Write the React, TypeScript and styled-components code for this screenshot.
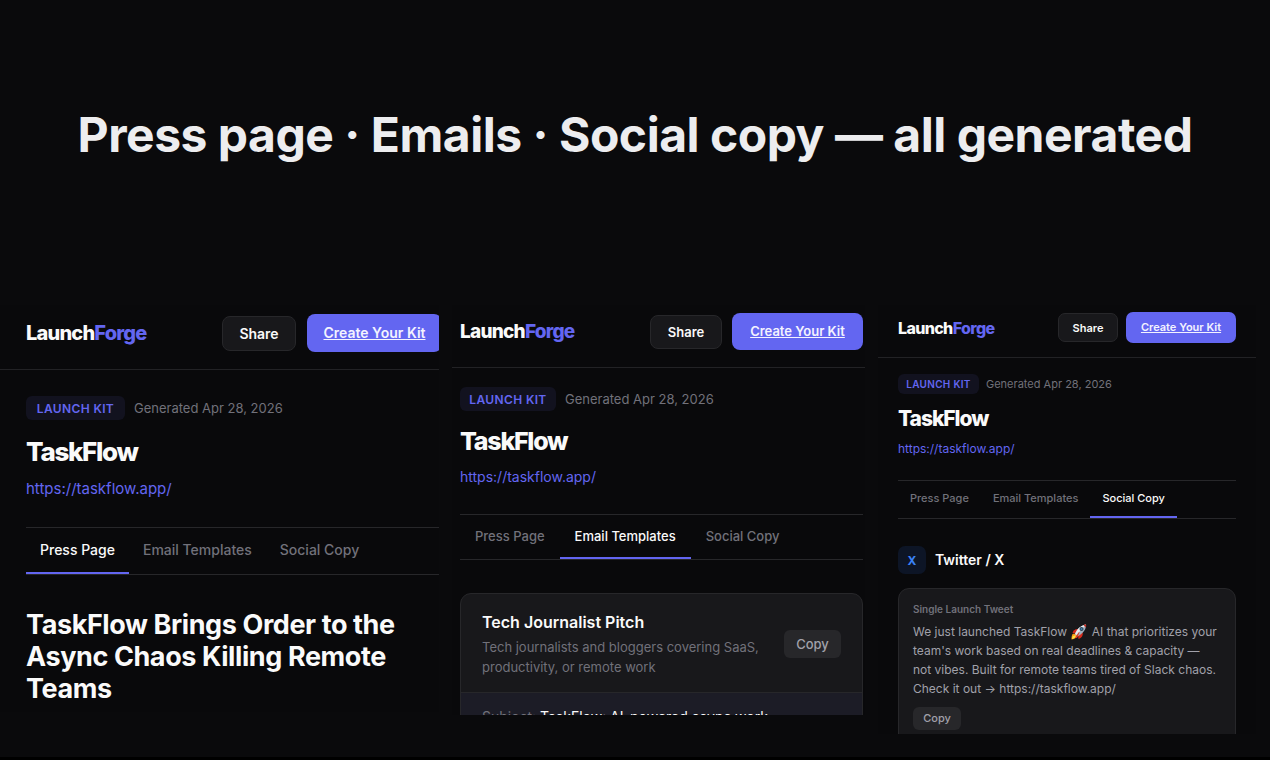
import React from "react";
import styled, { createGlobalStyle, ThemeProvider, css } from "styled-components";

const GlobalStyle = createGlobalStyle`
  *, *::before, *::after { box-sizing: border-box; }
  body {
    margin: 0;
    background: #0a0a0c;
    color: #fafafa;
    font-family: Inter, "Liberation Sans", sans-serif;
    -webkit-font-smoothing: antialiased;
    overflow: hidden;
  }
  h1, h2, h3, p { margin: 0; }
  button { font-family: inherit; cursor: pointer; }
`;

const large = {
  gutter: 26, cropHeight: 407, bleed: 29,
  headTop: 9, headBottom: 17, actionGap: 11,
  logo: 20, button: 14, share: [74, 35], create: [135, 38], radius: 8,
  bodyTop: 26, badge: [99, 24], badgeText: 12, meta: 13, metaGap: 9,
  title: 26, titleLine: 32, titleTop: 16,
  url: 15, urlLine: 22, urlTop: 10,
  navTop: 27, tab: 14, tabPad: 14, tabHeight: 46,
};

const medium: typeof large = {
  gutter: 8, cropHeight: 410, bleed: -7,
  headTop: 8, headBottom: 17, actionGap: 10,
  logo: 19, button: 13, share: [72, 34], create: [131, 37], radius: 8,
  bodyTop: 19, badge: [96, 24], badgeText: 12, meta: 13, metaGap: 9,
  title: 25, titleLine: 30, titleTop: 15,
  url: 14, urlLine: 22, urlTop: 10,
  navTop: 26, tab: 13, tabPad: 15, tabHeight: 44,
};

const small: typeof large = {
  gutter: 20, cropHeight: 429, bleed: 0,
  headTop: 7, headBottom: 14, actionGap: 8,
  logo: 16, button: 11, share: [60, 29], create: [110, 31], radius: 7,
  bodyTop: 16, badge: [81, 20], badgeText: 10, meta: 11, metaGap: 7,
  title: 21, titleLine: 26, titleTop: 12,
  url: 12, urlLine: 18, urlTop: 8,
  navTop: 22, tab: 11, tabPad: 12, tabHeight: 37,
};

type Size = typeof large;
declare module "styled-components" {
  export interface DefaultTheme extends Size {}
}

const Slide = styled.main`
  min-height: 100vh;
  display: flex;
  flex-direction: column;
  border-bottom: 3px solid #000;
`;

const Banner = styled.header`
  height: 305px;
  padding-top: 105px;
  text-align: center;
`;

const BannerTitle = styled.h1`
  font-size: 48px;
  line-height: 60px;
  font-weight: 700;
  letter-spacing: -0.01em;
  color: #ededef;
  white-space: nowrap;
`;

const Gallery = styled.section`
  display: grid;
  grid-template-columns: 439fr 413fr 378fr;
  column-gap: 13px;
  padding-right: 14px;
  align-items: start;
`;

const Panel = styled.article`
  min-width: 0;
  height: ${(p) => p.theme.cropHeight}px;
  overflow: hidden;
  background: #09090b;
`;

const PanelHead = styled.header`
  display: flex;
  align-items: center;
  justify-content: space-between;
  padding: ${(p) => p.theme.headTop}px ${(p) => p.theme.gutter}px ${(p) => p.theme.headBottom}px;
  margin-right: ${(p) => (p.theme.bleed > 0 ? -p.theme.bleed : 0)}px;
  ${(p) => p.theme.bleed < 0 && css`padding-right: 2px;`}
  border-bottom: 1px solid #222225;
`;

const Logo = styled.a`
  font-size: ${(p) => p.theme.logo}px;
  font-weight: 800;
  letter-spacing: -0.04em;
  color: #fafafa;
  text-decoration: none;
  span { color: #6366f1; }
`;

const Actions = styled.div`
  display: flex;
  align-items: center;
  gap: ${(p) => p.theme.actionGap}px;
`;

const ShareButton = styled.button`
  width: ${(p) => p.theme.share[0]}px;
  height: ${(p) => p.theme.share[1]}px;
  padding: 0;
  font-size: ${(p) => p.theme.button}px;
  font-weight: 600;
  color: #fafafa;
  background: #18181b;
  border: 1px solid #27272a;
  border-radius: ${(p) => p.theme.radius}px;
`;

const CreateLink = styled.a`
  display: flex;
  align-items: center;
  justify-content: center;
  width: ${(p) => p.theme.create[0]}px;
  height: ${(p) => p.theme.create[1]}px;
  padding-bottom: 1px;
  font-size: ${(p) => p.theme.button}px;
  font-weight: 600;
  color: #f3f3ff;
  background: #6366f1;
  border-radius: ${(p) => p.theme.radius}px;
  text-decoration: underline;
  white-space: nowrap;
`;

const PanelBody = styled.div`
  padding: ${(p) => p.theme.bodyTop}px ${(p) => p.theme.gutter}px 0;
  margin-right: ${(p) => (p.theme.bleed > 0 ? -p.theme.bleed : 0)}px;
  ${(p) => p.theme.bleed < 0 && css`padding-right: 2px;`}
`;

const MetaRow = styled.div`
  display: flex;
  align-items: center;
  gap: ${(p) => p.theme.metaGap}px;
  font-size: ${(p) => p.theme.meta}px;
  color: #71717a;
`;

const Badge = styled.span`
  display: flex;
  align-items: center;
  justify-content: center;
  width: ${(p) => p.theme.badge[0]}px;
  height: ${(p) => p.theme.badge[1]}px;
  font-size: ${(p) => p.theme.badgeText}px;
  font-weight: 600;
  letter-spacing: 0.03em;
  color: #6366f1;
  background: #12121f;
  border-radius: 6px;
`;

const Title = styled.h2`
  margin-top: ${(p) => p.theme.titleTop}px;
  font-size: ${(p) => p.theme.title}px;
  line-height: ${(p) => p.theme.titleLine}px;
  font-weight: 800;
  letter-spacing: -0.05em;
`;

const SiteLink = styled.a`
  display: block;
  width: fit-content;
  margin-top: ${(p) => p.theme.urlTop}px;
  font-size: ${(p) => p.theme.url}px;
  line-height: ${(p) => p.theme.urlLine}px;
  color: #6366f1;
  text-decoration: none;
`;

const TabBar = styled.nav`
  display: flex;
  margin-top: ${(p) => p.theme.navTop}px;
  border-top: 1px solid #27272a;
  border-bottom: 1px solid #27272a;
`;

const Tab = styled.button<{ $active: boolean }>`
  height: ${(p) => p.theme.tabHeight}px;
  padding: 0 ${(p) => p.theme.tabPad}px 1px;
  font-size: ${(p) => p.theme.tab}px;
  font-weight: 500;
  white-space: nowrap;
  color: ${(p) => (p.$active ? "#fafafa" : "#71717a")};
  background: none;
  border: 0;
  border-bottom: 2px solid ${(p) => (p.$active ? "#6366f1" : "transparent")};
`;

const Headline = styled.h3`
  margin-top: 34px;
  font-size: 27px;
  line-height: 32px;
  font-weight: 700;
  letter-spacing: -0.015em;
`;

const Card = styled.section<{ $top: number }>`
  margin-top: ${(p) => p.$top}px;
  background: #18181b;
  border: 1px solid #27272a;
  border-radius: 11px;
  overflow: hidden;
`;

const CardHead = styled.div`
  display: flex;
  align-items: center;
  justify-content: space-between;
  gap: 20px;
  padding: 16px 21px 15px;
  border-bottom: 1px solid #27272a;
`;

const CardTitle = styled.h3`
  font-size: 16px;
  line-height: 24px;
  font-weight: 600;
`;

const CardText = styled.p`
  margin-top: 3px;
  font-size: 13px;
  line-height: 20px;
  color: #71717a;
`;

const CopyButton = styled.button<{ $compact?: boolean }>`
  flex: none;
  width: ${(p) => (p.$compact ? 48 : 57)}px;
  height: ${(p) => (p.$compact ? 23 : 28)}px;
  padding: 0;
  font-size: ${(p) => (p.$compact ? 11 : 13)}px;
  font-weight: 500;
  color: #a1a1aa;
  background: #27272a;
  border: 0;
  border-radius: 6px;
`;

const Subject = styled.p`
  padding: 14px 21px;
  font-size: 14px;
  line-height: 20px;
  background: #1c1c26;
  span { color: #71717a; }
`;

const Channel = styled.div`
  display: flex;
  align-items: center;
  gap: 9px;
  margin-top: 27px;
`;

const ChannelIcon = styled.span`
  display: grid;
  place-items: center;
  width: 28px;
  height: 28px;
  font-size: 12px;
  font-weight: 700;
  color: #3b82f6;
  background: #0d1526;
  border-radius: 7px;
`;

const ChannelName = styled.h3`
  font-size: 14px;
  line-height: 18px;
  font-weight: 600;
`;

const Post = styled.div`
  padding: 13px 14px 30px;
`;

const PostLabel = styled.p`
  font-size: 10px;
  line-height: 14px;
  font-weight: 600;
  color: #71717a;
`;

const PostText = styled.p`
  margin: 6px 0 8px;
  font-size: 12px;
  line-height: 19px;
  color: #a1a1aa;
  white-space: nowrap;
`;

const Emoji = styled.svg`
  width: 16px;
  height: 16px;
  margin: 0 1px;
  vertical-align: -4px;
`;

const Rocket = () => (
  <Emoji viewBox="0 0 32 32" role="img" aria-label="rocket">
    <path d="M3 20c3-1 6-1 9 1l1 2c-1 4-5 7-12 8 0-4 0-7 2-11z" fill="#f59a16" />
    <path d="M3 25c3-3 6-2 8-2-1 4-5 6-9 7z" fill="#ffe34a" />
    <path d="M3 18c1-5 6-9 12-8l-6 9z" fill="#d92b1c" />
    <path d="M23 16c2 7-2 12-8 14l-1-8z" fill="#d92b1c" />
    <path d="M8 20C12 10 19 3 30 1c1 9-6 18-17 24z" fill="#9fb0bf" />
    <path d="M8 20C12 10 19 3 30 1L11 22z" fill="#e6edf2" />
    <path d="M25 2c2-1 3-1 5-1 1 2 0 4 0 6z" fill="#c92a1d" />
    <circle cx="21" cy="10" r="4" fill="#2c3e50" />
    <circle cx="21" cy="10" r="2.2" fill="#3f7fae" />
    <path d="M8 27l8-11 1 1-5 11z" fill="#e33b22" />
  </Emoji>
);

const TABS = ["Press Page", "Email Templates", "Social Copy"];

function KitPanel({ size, active, children }: { size: Size; active: string; children: React.ReactNode }) {
  return (
    <ThemeProvider theme={size}>
      <Panel>
        <PanelHead>
          <Logo href="#">Launch<span>Forge</span></Logo>
          <Actions>
            <ShareButton type="button">Share</ShareButton>
            <CreateLink href="#">Create Your Kit</CreateLink>
          </Actions>
        </PanelHead>
        <PanelBody>
          <MetaRow>
            <Badge>LAUNCH KIT</Badge>
            <span>Generated Apr 28, 2026</span>
          </MetaRow>
          <Title>TaskFlow</Title>
          <SiteLink href="https://taskflow.app/">https://taskflow.app/</SiteLink>
          <TabBar>
            {TABS.map((name) => (
              <Tab key={name} type="button" $active={name === active}>{name}</Tab>
            ))}
          </TabBar>
          {children}
        </PanelBody>
      </Panel>
    </ThemeProvider>
  );
}

export default function App() {
  return (
    <>
      <GlobalStyle />
      <Slide>
        <Banner>
          <BannerTitle>Press page · Emails · Social copy — all generated</BannerTitle>
        </Banner>
        <Gallery>
          <KitPanel size={large} active="Press Page">
            <Headline>TaskFlow Brings Order to the Async Chaos Killing Remote Teams</Headline>
          </KitPanel>
          <KitPanel size={medium} active="Email Templates">
            <Card $top={33}>
              <CardHead>
                <div>
                  <CardTitle>Tech Journalist Pitch</CardTitle>
                  <CardText>Tech journalists and bloggers covering SaaS, productivity, or remote work</CardText>
                </div>
                <CopyButton type="button">Copy</CopyButton>
              </CardHead>
              <Subject><span>Subject:</span> TaskFlow: AI-powered async work</Subject>
            </Card>
          </KitPanel>
          <KitPanel size={small} active="Social Copy">
            <Channel>
              <ChannelIcon>X</ChannelIcon>
              <ChannelName>Twitter / X</ChannelName>
            </Channel>
            <Card $top={14}>
              <Post>
                <PostLabel>Single Launch Tweet</PostLabel>
                <PostText>
                  We just launched TaskFlow <Rocket /> AI that prioritizes your<br />
                  team's work based on real deadlines &amp; capacity —<br />
                  not vibes. Built for remote teams tired of Slack chaos.<br />
                  Check it out → https://taskflow.app/
                </PostText>
                <CopyButton type="button" $compact>Copy</CopyButton>
              </Post>
            </Card>
          </KitPanel>
        </Gallery>
      </Slide>
    </>
  );
}
